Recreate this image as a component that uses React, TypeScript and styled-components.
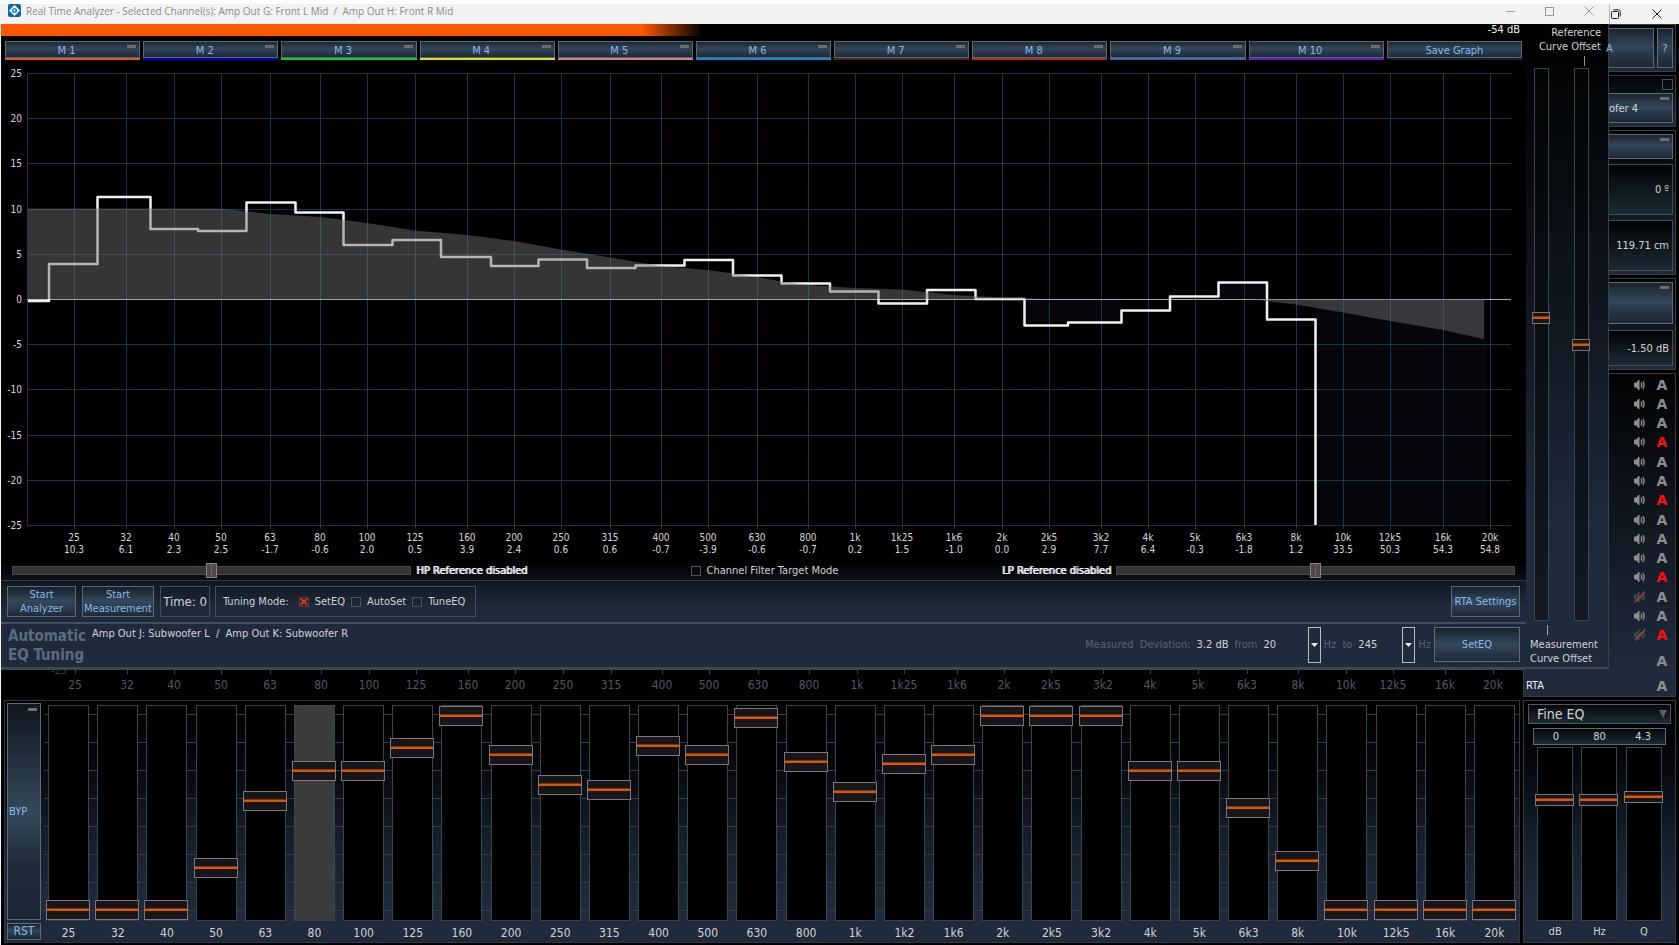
import React from 'react';
import styled, { createGlobalStyle } from 'styled-components';

const UI_FONT = '"DejaVu Sans Condensed", "Noto Sans", sans-serif';
const TITLE_FONT = '"Open Sans", "Noto Sans", sans-serif';

const LINE = '#3f5157';
const NAVY = '#1f2b3c';
const LINK = '#86b9ea';
const METAL = 'linear-gradient(to bottom, #1a242f 0%, #34485b 48%, #2b3c4e 60%, #1b2735 100%)';

const GlobalStyle = createGlobalStyle`
  * { box-sizing: border-box; }
  body { margin: 0; background: #000; }
  button, input, select { font: inherit; color: inherit; margin: 0; padding: 0; }
`;

/* ---------- data ---------- */

const MEMORIES = [
  { name: 'M 1', color: '#e2542a' },
  { name: 'M 2', color: '#0400c4' },
  { name: 'M 3', color: '#0ccf1c' },
  { name: 'M 4', color: '#e2e010' },
  { name: 'M 5', color: '#cf7d90' },
  { name: 'M 6', color: '#1189dd' },
  { name: 'M 7', color: '#4a2222' },
  { name: 'M 8', color: '#b92b2b' },
  { name: 'M 9', color: '#3b64b0' },
  { name: 'M 10', color: '#6517c8' },
];

const GRID: { x: number; hz: string; dev: string; lower: number }[] = [
  { x: 74, hz: '25', dev: '10.3', lower: 75 },
  { x: 126, hz: '32', dev: '6.1', lower: 127 },
  { x: 174, hz: '40', dev: '2.3', lower: 174 },
  { x: 221, hz: '50', dev: '2.5', lower: 221 },
  { x: 270, hz: '63', dev: '-1.7', lower: 270 },
  { x: 320, hz: '80', dev: '-0.6', lower: 321 },
  { x: 367, hz: '100', dev: '2.0', lower: 369 },
  { x: 415, hz: '125', dev: '0.5', lower: 416 },
  { x: 467, hz: '160', dev: '3.9', lower: 468 },
  { x: 514, hz: '200', dev: '2.4', lower: 515 },
  { x: 561, hz: '250', dev: '0.6', lower: 563 },
  { x: 610, hz: '315', dev: '0.6', lower: 611 },
  { x: 661, hz: '400', dev: '-0.7', lower: 662 },
  { x: 708, hz: '500', dev: '-3.9', lower: 709 },
  { x: 757, hz: '630', dev: '-0.6', lower: 758 },
  { x: 808, hz: '800', dev: '-0.7', lower: 809 },
  { x: 855, hz: '1k', dev: '0.2', lower: 857 },
  { x: 902, hz: '1k25', dev: '1.5', lower: 904 },
  { x: 954, hz: '1k6', dev: '-1.0', lower: 957 },
  { x: 1002, hz: '2k', dev: '0.0', lower: 1004 },
  { x: 1049, hz: '2k5', dev: '2.9', lower: 1051 },
  { x: 1101, hz: '3k2', dev: '7.7', lower: 1103 },
  { x: 1148, hz: '4k', dev: '6.4', lower: 1150 },
  { x: 1195, hz: '5k', dev: '-0.3', lower: 1198 },
  { x: 1244, hz: '6k3', dev: '-1.8', lower: 1247 },
  { x: 1296, hz: '8k', dev: '1.2', lower: 1298 },
  { x: 1343, hz: '10k', dev: '33.5', lower: 1346 },
  { x: 1390, hz: '12k5', dev: '50.3', lower: 1393 },
  { x: 1443, hz: '16k', dev: '54.3', lower: 1445 },
  { x: 1490, hz: '20k', dev: '54.8', lower: 1493 },
];

const DB_LEVELS = [25, 20, 15, 10, 5, 0, -5, -10, -15, -20, -25];
const dbY = (db: number) => Math.round(73 + (25 - db) * 9.04);

const STEP_LINE =
  'M28 301H49V264H97.5V197H150.5V229H198V231H246.5V202.5H295.5V212.5H343.5V245H392.5V240H441V257H491V266H538.5V259.5H587V268H635.5V265.5H684.5V260H733V275.5H781.5V283.5H830V291.5H878.5V303.5H927V290H975.5V299H1024.5V325.5H1068V322.5H1121.5V310.5H1170V296.5H1218.5V282.5H1267V319.5H1315.5V525';

const REF_LOW =
  'M28 299V208.5H221L270 214L321 217L367 223L415 230.5L467 235L514 241L561 249.5L610 257.5L661 266L708 270L757 277L782 281.5L808 285L855 288L902 289.5L954 295L1002 297.5L1049 299Z';
const REF_HIGH = 'M1250 299L1296 304.5L1343 312.5L1390 321L1443 330L1484 339V299Z';

const EQ_BANDS: { hz: string; value: number; active?: boolean }[] = [
  { hz: '25', value: 0 },
  { hz: '32', value: 0 },
  { hz: '40', value: 0 },
  { hz: '50', value: 42 },
  { hz: '63', value: 109 },
  { hz: '80', value: 139, active: true },
  { hz: '100', value: 139 },
  { hz: '125', value: 162 },
  { hz: '160', value: 194 },
  { hz: '200', value: 155 },
  { hz: '250', value: 125 },
  { hz: '315', value: 120 },
  { hz: '400', value: 164 },
  { hz: '500', value: 155 },
  { hz: '630', value: 192 },
  { hz: '800', value: 148 },
  { hz: '1k', value: 118 },
  { hz: '1k2', value: 146 },
  { hz: '1k6', value: 155 },
  { hz: '2k', value: 194 },
  { hz: '2k5', value: 194 },
  { hz: '3k2', value: 194 },
  { hz: '4k', value: 139 },
  { hz: '5k', value: 139 },
  { hz: '6k3', value: 102 },
  { hz: '8k', value: 49 },
  { hz: '10k', value: 0 },
  { hz: '12k5', value: 0 },
  { hz: '16k', value: 0 },
  { hz: '20k', value: 0 },
];

const FINE_SLIDERS = [
  { unit: 'dB', shown: '0', value: 114 },
  { unit: 'Hz', shown: '80', value: 114 },
  { unit: 'Q', shown: '4.3', value: 117 },
];

const CHANNELS = Array.from({ length: 14 }, (_, i) => ({
  muted: i === 11 || i === 13,
  alert: [3, 6, 10, 13].includes(i),
}));

/* ---------- page frame ---------- */

const Page = styled.div`
  display: flex;
  flex-direction: column;
  min-height: 100vh;
  border-top: 4px solid #fff;
  border-left: 1px solid #f4f4f4;
  background: #000;
  color: #d2d2d2;
  font: 11px/14px ${UI_FONT};
  cursor: default;
`;

const Row = styled.div`
  display: flex;
`;

const Window = styled.section`
  display: flex;
  flex: 1;
  flex-direction: column;
  min-width: 0;
  background: #000;
  border-bottom-right-radius: 6px;
`;

const TitleBar = styled.header<{ $outer?: boolean }>`
  display: flex;
  align-items: ${(p) => (p.$outer ? 'center' : 'flex-start')};
  height: 20px;
  padding-left: ${(p) => (p.$outer ? '0' : '7px')};
  background: #f2f2f2;
  border-left: ${(p) => (p.$outer ? '1px solid #b8b8b8' : '0')};
  color: #8c8c8c;
  font: 10px/14px ${TITLE_FONT};
`;

const TitleText = styled.h1`
  flex: 1;
  margin: 0 0 0 4px;
  font: inherit;
  white-space: pre;
`;

const CaptionButton = styled.button<{ $width: number; $dark?: boolean }>`
  display: flex;
  align-items: center;
  justify-content: center;
  width: ${(p) => p.$width}px;
  height: 14px;
  border: 0;
  background: none;
  color: ${(p) => (p.$dark ? '#1c1c1c' : '#9a9a9a')};
`;

const WindowBody = styled.div`
  display: flex;
  border-bottom: 2px solid #3a4a50;
`;

const MainColumn = styled.div`
  flex: 1;
  min-width: 0;
`;

/* ---------- level meter and memory buttons ---------- */

const LevelMeter = styled.div`
  display: flex;
  justify-content: flex-end;
  height: 12px;
  padding-right: 6px;
  background: linear-gradient(to right, #ff5800 42%, #000 46%);
  color: #f0f0f0;
  line-height: 12px;
`;

const MemoryBar = styled.div`
  display: grid;
  grid-template-columns: repeat(11, 1fr);
  gap: 3px;
  padding: 5px 4px 0 4px;
`;

const MemoryButton = styled.button<{ $color?: string }>`
  position: relative;
  height: 19px;
  padding: 2px ${(p) => (p.$color ? '12px' : '0')} 0 0;
  border: 0;
  border-bottom: 2px solid ${(p) => p.$color ?? '#16202c'};
  background: ${METAL};
  box-shadow: inset 0 0 0 1px #57696f;
  color: ${LINK};
  line-height: 15px;

  &::after {
    content: '';
    display: ${(p) => (p.$color ? 'block' : 'none')};
    position: absolute;
    top: 4px;
    right: 4px;
    width: 9px;
    height: 3px;
    background: #6c6c6b;
  }
`;

/* ---------- chart ---------- */

const ChartSvg = styled.svg`
  display: block;
  width: 100%;
  height: auto;
  font-family: ${UI_FONT};
  text-anchor: middle;
`;

const Chart = () => (
  <ChartSvg viewBox="1 60 1525 501" role="img" aria-label="Real time analyzer curve">
    <path d="M1218 299V283H1267V299ZM1024 299H1121V322H1024ZM1316 299H1487V525H1316Z" fill="#06060c" />
    <g stroke="#183846" strokeWidth="1" shapeRendering="crispEdges">
      {DB_LEVELS.map((db) => (
        <line key={db} x1="27" x2="1511" y1={dbY(db) + 0.5} y2={dbY(db) + 0.5} />
      ))}
      <line x1="27.5" x2="27.5" y1="73" y2="525" />
      {GRID.map((g) => (
        <line key={g.hz} x1={g.x + 0.5} x2={g.x + 0.5} y1="73" y2="529" />
      ))}
    </g>
    <line x1="27" x2="1511" y1="299.5" y2="299.5" stroke="#a4a8a8" />
    <path d={STEP_LINE} fill="none" stroke="#f2f2f2" strokeWidth="2.500" strokeLinejoin="round" />
    <path d={REF_LOW} fill="#707072" fillOpacity="0.47" />
    <path d={REF_HIGH} fill="#707072" fillOpacity="0.47" />
    <g fill="#d8d8d8" fontSize="10">
      {DB_LEVELS.map((db) => (
        <text key={db} x="22" y={dbY(db) + 4} textAnchor="end">
          {db}
        </text>
      ))}
      {GRID.map((g) => (
        <text key={g.hz} x={g.x} y="541">
          {g.hz}
        </text>
      ))}
      {GRID.map((g) => (
        <text key={g.hz} x={g.x} y="553">
          {g.dev}
        </text>
      ))}
    </g>
  </ChartSvg>
);

/* ---------- controls ---------- */

const FilterRow = styled.div`
  display: flex;
  align-items: center;
  justify-content: space-between;
  height: 19px;
  padding: 0 11px;
  background: linear-gradient(to bottom, #000, #0b0f15);
`;

const FilterLabel = styled.label`
  display: flex;
  align-items: center;
  gap: 5px;
  color: #f4f4f4;
  text-shadow: 1px 0 0 #f4f4f4;
`;

const HorizontalSlider = styled.input`
  appearance: none;
  width: 399px;
  height: 9px;
  border: 1px solid #474747;
  background: #343434;

  &::-webkit-slider-thumb {
    appearance: none;
    width: 11px;
    height: 15px;
    border: 1px solid #8b8085;
    background: linear-gradient(to right, #4c474b 4px, #85603f 4px, #85603f 5px, #4c474b 5px);
  }
`;

const Check = styled.input`
  appearance: none;
  display: flex;
  align-items: center;
  justify-content: center;
  width: 10px;
  height: 10px;
  border: 1px solid #43565b;
  background: transparent;

  &:checked {
    border-color: #5a3a36;
  }
  &:checked::before {
    content: '✕';
    color: #ff3410;
    font: bold 12px/10px "DejaVu Sans", sans-serif;
    text-shadow: 0 0 1px #ff3410;
  }
`;

const CheckLabel = styled.label`
  display: flex;
  align-items: center;
  gap: 6px;
  white-space: nowrap;
`;

const ControlRow = styled.div`
  display: flex;
  gap: 6px;
  padding: 5px 6px;
  border-top: 1px solid #2f3f47;
  border-bottom: 2px solid #3d505b;
  background: linear-gradient(to bottom, #10161e 0%, ${NAVY} 65%);
`;

const ActionButton = styled.button<{ $width: number }>`
  width: ${(p) => p.$width}px;
  min-height: 31px;
  padding-top: 1px;
  border: 1px solid #5b6d74;
  background: linear-gradient(to bottom, #16202b 0%, #34485b 50%, #1d2938 100%);
  color: ${LINK};
  line-height: 14px;
  white-space: nowrap;
`;

const TimeBox = styled.output`
  width: 50px;
  margin-right: -1px;
  padding-top: 1px;
  border: 1px solid ${LINE};
  font-size: 13px;
  line-height: 28px;
  text-align: center;
  white-space: nowrap;
`;

const TuningBox = styled.fieldset`
  display: flex;
  align-items: center;
  gap: 6px;
  width: 261px;
  margin: 0;
  padding: 1px 7px 0;
  border: 1px solid ${LINE};
`;

const TuningTitle = styled.span`
  margin-right: 4px;
  white-space: nowrap;
`;

const Spacer = styled.div`
  flex: 1;
`;

const TuneRow = styled.div`
  display: flex;
  height: 43px;
  padding: 3px 6px 5px 7px;
  background: ${NAVY};
`;

const TuneTitle = styled.h2`
  width: 84px;
  margin: 0;
  color: #5c6b80;
  font: bold 15px/19px ${UI_FONT};
`;

const TuneChannels = styled.span`
  white-space: pre;
`;

const DeviationForm = styled.div`
  display: flex;
  align-items: center;
  gap: 6px;
  padding: 1px 3px 0 0;
  color: #55647a;
  white-space: pre;
`;

const Value = styled.span`
  color: #d2d2d2;
`;

const Unit = styled.span`
  margin-left: -3px;
`;

const Combo = styled.span`
  display: grid;
  width: 57px;
  height: 36px;
`;

const ComboSelect = styled.select`
  grid-area: 1 / 1;
  appearance: none;
  border: 0;
  background: transparent;
  color: #d2d2d2;
`;

const ComboArrow = styled.span`
  grid-area: 1 / 1;
  display: flex;
  align-items: center;
  justify-content: center;
  justify-self: end;
  width: 13px;
  border: 1px solid #b9bcc0;
  pointer-events: none;
`;

/* ---------- vertical sliders ---------- */

const VerticalSlider = styled.input<{ $width: number; $height: number; $thumb: number; $fill?: string }>`
  appearance: none;
  writing-mode: vertical-lr;
  direction: rtl;
  width: ${(p) => p.$width}px;
  height: ${(p) => p.$height}px;
  border: 1px solid #37484b;
  background: ${(p) => p.$fill ?? '#000'};

  &::-webkit-slider-thumb {
    appearance: none;
    width: ${(p) => p.$width + 3}px;
    height: ${(p) => p.$thumb}px;
    margin-left: -1px;
    border: 1px solid #7d757b;
    background: linear-gradient(
      to bottom,
      #17161b calc(50% - 2px),
      #7a3708 calc(50% - 2px),
      #7a3708 calc(50% - 1px),
      #dc5604 calc(50% - 1px),
      #dc5604 calc(50% + 1px),
      #17161b calc(50% + 1px)
    );
  }
`;

const OffsetColumn = styled.div`
  display: flex;
  flex-direction: column;
  width: 83px;
  padding: 2px 6px 1px 4px;
  background: linear-gradient(to bottom, #000 0%, #05080b 15%, #141c27 55%, ${NAVY} 78%);
  border-right: 1px solid #3a4145;
`;

const OffsetLabel = styled.div<{ $end?: boolean }>`
  padding-right: 1px;
  text-align: ${(p) => (p.$end ? 'right' : 'left')};
`;

const OffsetTick = styled.div<{ $end?: boolean }>`
  width: 1px;
  height: 10px;
  margin: ${(p) => (p.$end ? '2px 17px 2px auto' : '4px 0 3px 17px')};
  background: ${(p) => (p.$end ? '#a08c78' : '#a0a4a8')};
`;

const OffsetSliders = styled.div`
  display: flex;
  flex: 1;
  gap: 25px;
  padding-left: 4px;
`;

/* ---------- side strip ---------- */

const Side = styled.aside`
  display: flex;
  flex-direction: column;
  gap: 3px;
  width: 70px;
`;

const SidePanel = styled.div<{ $gap?: number; $grow?: boolean; $first?: boolean }>`
  display: flex;
  flex: ${(p) => (p.$grow ? '1' : 'none')};
  flex-direction: column;
  gap: ${(p) => p.$gap ?? 4}px;
  width: 67px;
  margin-top: ${(p) => (p.$first ? '-3px' : '0')};
  padding: 3px 2px ${(p) => (p.$grow ? '0' : '3px')} 0;
  border: 1px solid #3c3c3e;
  border-left: 0;
  border-bottom-width: ${(p) => (p.$grow ? '0' : '1px')};
  background: linear-gradient(to bottom, #020304, ${NAVY});
`;

const SideRow = styled.div`
  display: flex;
  justify-content: flex-end;
  gap: 3px;
`;

const SideButton = styled.button<{ $height: number; $width?: number; $flag?: boolean; $tucked?: boolean }>`
  position: relative;
  width: ${(p) => (p.$width ? `${p.$width}px` : '100%')};
  height: ${(p) => p.$height}px;
  padding-top: 2px;
  border: 1px solid #5b6d74;
  border-left-width: ${(p) => (p.$width === 16 ? '1px' : '0')};
  background: ${METAL};
  color: ${(p) => (p.$flag ? '#d2d2d2' : LINK)};
  text-align: ${(p) => (p.$width === 16 ? 'center' : 'left')};
  text-indent: ${(p) => (p.$tucked ? '-3px' : '0')};

  &::after {
    content: '';
    display: ${(p) => (p.$flag ? 'block' : 'none')};
    position: absolute;
    top: 3px;
    right: 3px;
    width: 9px;
    height: 3px;
    background: #6c6c6b;
  }
`;

const SideCheck = styled(Check)`
  width: 11px;
  height: 11px;
`;

const Readout = styled.output<{ $height: number }>`
  display: flex;
  align-items: center;
  justify-content: flex-end;
  height: ${(p) => p.$height}px;
  padding: 1px 3px 0 0;
  border: 1px solid ${LINE};
  border-left: 0;
  background: linear-gradient(to bottom, #020304, #1d2a33);
  white-space: nowrap;
`;

const ChannelList = styled.ul`
  display: grid;
  grid-auto-rows: 1fr;
  height: 270px;
  margin: -2px 0 0;
  padding: 0;
  list-style: none;
`;

const ChannelItem = styled.li`
  display: flex;
  align-items: center;
  justify-content: flex-end;
  gap: 10px;
  padding-right: 5px;
  list-style: none;
`;

const MasterItem = styled(ChannelItem).attrs({ as: 'div' })`
  padding-top: 4px;
`;

const IconButton = styled.button`
  display: flex;
  border: 0;
  background: none;
`;

const AutoMark = styled.button<{ $alert?: boolean }>`
  width: 12px;
  border: 0;
  background: none;
  color: ${(p) => (p.$alert ? '#ff0d0d' : '#8b8d8f')};
  font: bold 14px/16px "DejaVu Sans", sans-serif;
  text-align: center;
`;

const Speaker = ({ muted }: { muted: boolean }) => (
  <svg width="12" height="12" viewBox="0 0 12 12" fill="none" stroke={muted ? '#4c4a4c' : '#8e8e8e'}>
    <path d="M0.500 4H2.500L5 1V11L2.500 8H0.500Z" fill={muted ? '#3b3f45' : '#8e8e8e'} />
    <path d="M7 3.500Q8.400 6 7 8.500M8.800 2.200Q11.400 6 8.800 9.800" strokeWidth="1.400" />
    {muted && <path d="M1 11.500L11 0.500" stroke="#a8482c" strokeWidth="1.400" />}
  </svg>
);

/* ---------- lower part ---------- */

const AxisSvg = styled.svg`
  display: block;
  flex: 1;
  min-width: 0;
  font-family: ${UI_FONT};
  font-size: 12px;
  text-anchor: middle;
`;

const RtaChannel = styled.div`
  display: flex;
  align-items: center;
  justify-content: space-between;
  width: 153px;
  height: 28px;
  margin-right: 3px;
  padding: 7px 7px 0 2px;
  border: 1px solid #3c3c3e;
  border-top: 0;
  background: ${NAVY};
  color: #f0f0f0;
`;

const Lower = styled.div`
  display: flex;
  gap: 3px;
  padding: 3px 3px 0 3px;
`;

const EqPanel = styled.section`
  display: flex;
  flex: 1;
  gap: 3px;
  min-width: 0;
  padding: 2px 0 2px 2px;
  border: 1px solid #34373a;
  background: linear-gradient(to bottom, #000 0%, #05080c 25%, #141d29 55%, ${NAVY} 85%);
`;

const BypassColumn = styled.div`
  display: flex;
  flex-direction: column;
  gap: 3px;
  width: 34px;
`;

const BypassButton = styled.button`
  position: relative;
  flex: 1;
  padding-left: 1px;
  border: 1px solid #5b6d74;
  background: linear-gradient(to bottom, #10161d 0%, #34485b 50%, #1f2b3a 75%, #1b2636 100%);
  color: ${LINK};
  text-align: left;

  &::after {
    content: '';
    position: absolute;
    top: 4px;
    right: 3px;
    width: 9px;
    height: 3px;
    background: #6f7173;
  }
`;

const ResetButton = styled.button`
  height: 17px;
  border: 1px solid #5b6d74;
  background: ${METAL};
  color: ${LINK};
  font-size: 12px;
  line-height: 15px;
`;

const Bands = styled.div`
  display: grid;
  flex: 1;
  grid-template-columns: repeat(30, 1fr);
  min-width: 0;
  font-size: 12px;
`;

const Band = styled.label`
  display: flex;
  flex-direction: column;
  align-items: center;
  gap: 5px;
`;

const BandTrack = styled.span`
  display: flex;
  justify-content: center;
  width: 100%;
  padding-top: 2px;
  background: linear-gradient(to bottom, transparent 27px, #363c40 27px) 0 -16px / 100% 28px;
`;

const FinePanel = styled.section`
  display: flex;
  flex-direction: column;
  width: 153px;
  padding: 3px 4px 0;
  border: 1px solid #3c3c3e;
  background: linear-gradient(to bottom, #000 0%, #05080c 25%, #141d29 55%, ${NAVY} 85%);
`;

const FineSelectBox = styled.span`
  display: grid;
  height: 20px;
  border: 1px solid #4a5c62;
  background: linear-gradient(to bottom, #05080b, #1d2a33);
`;

const FineSelect = styled.select`
  grid-area: 1 / 1;
  appearance: none;
  padding-left: 8px;
  border: 0;
  background: transparent;
  font-size: 14px;
`;

const FineArrow = styled.svg`
  grid-area: 1 / 1;
  justify-self: end;
  margin: 5px 3px 0 0;
  pointer-events: none;
`;

const FineGrid = styled.div<{ $boxed?: boolean }>`
  display: grid;
  grid-template-columns: repeat(3, 1fr);
  justify-items: center;
  margin: ${(p) => (p.$boxed ? '4px 5px 2px' : '0 5px')};
  border: ${(p) => (p.$boxed ? '1px solid #5b6d74' : '0')};
  background: ${(p) => (p.$boxed ? 'linear-gradient(to bottom, #05080b, #1d2a38)' : 'none')};
  line-height: 15px;
`;

const FineBand = styled.label`
  display: flex;
  flex-direction: column;
  align-items: center;
  gap: 3px;
`;

const Frequency = ({ label, value }: { label: string; value: string }) => (
  <Combo>
    <ComboSelect aria-label={label} defaultValue={value}>
      <option>{value}</option>
    </ComboSelect>
    <ComboArrow>
      <svg width="7" height="5" viewBox="0 0 7 5">
        <path d="M0 0H7L3.500 4Z" fill="#e8e8e8" />
      </svg>
    </ComboArrow>
  </Combo>
);

const App = () => (
  <>
    <GlobalStyle />
    <Page>
      <Row>
        <Window>
          <TitleBar>
            <svg width="14" height="14" viewBox="0 0 14 14">
              <rect width="13" height="13" rx="2" fill="#0b66b0" />
              <path d="M6.500 1L12 6.500L6.500 12L1 6.500Z" fill="#fff" />
              <circle cx="6.500" cy="6.500" r="2.600" fill="#1c87cf" />
              <circle cx="6.500" cy="6.500" r="1" fill="#fff" />
            </svg>
            <TitleText>
              {'Real Time Analyzer - Selected Channel(s): Amp Out G: Front L Mid  /  Amp Out H: Front R Mid'}
            </TitleText>
            <CaptionButton $width={39} aria-label="Minimize">
              <svg width="9" height="9" viewBox="0 0 9 9" stroke="currentColor">
                <path d="M0 4.500H9" />
              </svg>
            </CaptionButton>
            <CaptionButton $width={39} aria-label="Maximize">
              <svg width="9" height="9" viewBox="0 0 9 9" stroke="currentColor" fill="none">
                <rect x="0.500" y="0.500" width="8" height="8" />
              </svg>
            </CaptionButton>
            <CaptionButton $width={40} aria-label="Close">
              <svg width="10" height="10" viewBox="0 0 10 10" stroke="currentColor">
                <path d="M0.500 0.500L9.500 9.500M9.500 0.500L0.500 9.500" />
              </svg>
            </CaptionButton>
          </TitleBar>
          <WindowBody>
            <MainColumn>
              <LevelMeter>-54 dB</LevelMeter>
              <MemoryBar>
                {MEMORIES.map((m) => (
                  <MemoryButton key={m.name} $color={m.color}>
                    {m.name}
                  </MemoryButton>
                ))}
                <MemoryButton>Save Graph</MemoryButton>
              </MemoryBar>
              <Chart />
              <FilterRow>
                <FilterLabel>
                  <HorizontalSlider type="range" defaultValue={50} />
                  HP Reference disabled
                </FilterLabel>
                <CheckLabel>
                  <Check type="checkbox" />
                  Channel Filter Target Mode
                </CheckLabel>
                <FilterLabel>
                  LP Reference disabled
                  <HorizontalSlider type="range" defaultValue={50} />
                </FilterLabel>
              </FilterRow>
              <ControlRow>
                <ActionButton $width={69}>
                  Start
                  <br />
                  Analyzer
                </ActionButton>
                <ActionButton $width={72}>
                  Start
                  <br />
                  Measurement
                </ActionButton>
                <TimeBox>Time: 0</TimeBox>
                <TuningBox>
                  <TuningTitle>Tuning Mode:</TuningTitle>
                  <CheckLabel>
                    <Check type="checkbox" defaultChecked />
                    SetEQ
                  </CheckLabel>
                  <CheckLabel>
                    <Check type="checkbox" />
                    AutoSet
                  </CheckLabel>
                  <CheckLabel>
                    <Check type="checkbox" />
                    TuneEQ
                  </CheckLabel>
                </TuningBox>
                <Spacer />
                <ActionButton $width={69}>RTA Settings</ActionButton>
              </ControlRow>
              <TuneRow>
                <TuneTitle>
                  Automatic
                  <br />
                  EQ Tuning
                </TuneTitle>
                <TuneChannels>{'Amp Out J: Subwoofer L  /  Amp Out K: Subwoofer R'}</TuneChannels>
                <Spacer />
                <DeviationForm>
                  <span>{'Measured  Deviation:'}</span>
                  <Value>3.2 dB</Value>
                  <span>from</span>
                  <Frequency label="From frequency" value="20" />
                  <Unit>{'Hz  to'}</Unit>
                  <Frequency label="To frequency" value="245" />
                  <Unit>Hz</Unit>
                </DeviationForm>
                <ActionButton $width={86}>SetEQ</ActionButton>
              </TuneRow>
            </MainColumn>
            <OffsetColumn>
              <OffsetLabel $end>Reference</OffsetLabel>
              <OffsetLabel $end>Curve Offset</OffsetLabel>
              <OffsetTick $end />
              <OffsetSliders>
                <VerticalSlider
                  type="range"
                  aria-label="Measurement curve offset"
                  max={539}
                  defaultValue={296}
                  $width={15}
                  $height={553}
                  $thumb={12}
                  $fill="linear-gradient(to bottom, #030506, #121923)"
                />
                <VerticalSlider
                  type="range"
                  aria-label="Reference curve offset"
                  max={539}
                  defaultValue={269}
                  $width={15}
                  $height={553}
                  $thumb={12}
                  $fill="linear-gradient(to bottom, #030506, #121923)"
                />
              </OffsetSliders>
              <OffsetTick />
              <OffsetLabel>Measurement</OffsetLabel>
              <OffsetLabel>Curve Offset</OffsetLabel>
            </OffsetColumn>
          </WindowBody>
        </Window>
        <Side>
          <TitleBar $outer>
            <CaptionButton $width={12} $dark aria-label="Restore">
              <svg width="10" height="10" viewBox="0 0 10 10" stroke="currentColor" fill="none">
                <rect x="0.500" y="2.500" width="7" height="7" rx="1" />
                <path d="M2.500 0.800H7.500Q9.200 0.800 9.200 2.500V7.500" />
              </svg>
            </CaptionButton>
            <Spacer />
            <CaptionButton $width={44} $dark aria-label="Close application">
              <svg width="10" height="10" viewBox="0 0 10 10" stroke="currentColor">
                <path d="M0.500 0.500L9.500 9.500M9.500 0.500L0.500 9.500" />
              </svg>
            </CaptionButton>
          </TitleBar>
          <SidePanel $first>
            <SideRow>
              <SideButton $height={40} $width={45} $tucked>
                A
              </SideButton>
              <SideButton $height={40} $width={16}>
                ?
              </SideButton>
            </SideRow>
          </SidePanel>
          <SidePanel $gap={3}>
            <SideRow>
              <SideCheck type="checkbox" aria-label="Select output" />
            </SideRow>
            <SideButton $height={30} $flag>
              ofer 4
            </SideButton>
          </SidePanel>
          <SidePanel $gap={5}>
            <SideButton $height={25} $flag aria-label="Phase" />
            <Readout $height={51}>0 º</Readout>
            <Readout $height={51}>119.71 cm</Readout>
          </SidePanel>
          <SidePanel $gap={6}>
            <SideButton $height={42} $flag aria-label="Gain" />
            <Readout $height={36}>-1.50 dB</Readout>
          </SidePanel>
          <SidePanel $grow>
            <ChannelList>
              {CHANNELS.map((c, i) => (
                <ChannelItem key={i}>
                  <IconButton aria-label={c.muted ? 'Unmute' : 'Mute'}>
                    <Speaker muted={c.muted} />
                  </IconButton>
                  <AutoMark $alert={c.alert}>A</AutoMark>
                </ChannelItem>
              ))}
            </ChannelList>
            <MasterItem>
              <AutoMark>A</AutoMark>
            </MasterItem>
          </SidePanel>
        </Side>
      </Row>
      <Row>
        <AxisSvg viewBox="1 671 1522 28">
          <path d="M1 671.500H1523" stroke="#3a4a4e" />
          <text x="59" y="676" fontSize="11" fill="#3c444e">
            -25
          </text>
          {GRID.map((g) => (
            <g key={g.hz}>
              <path d={`M${g.lower + 0.5} 672V676`} stroke="#2c4650" />
              <text x={g.lower} y="691" fill="#4e5a69">
                {g.hz}
              </text>
            </g>
          ))}
        </AxisSvg>
        <RtaChannel>
          RTA
          <AutoMark>A</AutoMark>
        </RtaChannel>
      </Row>
      <Lower>
        <EqPanel>
          <BypassColumn>
            <BypassButton>BYP</BypassButton>
            <ResetButton>RST</ResetButton>
          </BypassColumn>
          <Bands>
            {EQ_BANDS.map((b) => (
              <Band key={b.hz}>
                <BandTrack>
                  <VerticalSlider
                    type="range"
                    max={194}
                    defaultValue={b.value}
                    $width={41}
                    $height={216}
                    $thumb={20}
                    $fill={b.active ? '#3c3c3c' : '#000'}
                  />
                </BandTrack>
                {b.hz}
              </Band>
            ))}
          </Bands>
        </EqPanel>
        <FinePanel>
          <FineSelectBox>
            <FineSelect aria-label="Equalizer type" defaultValue="Fine EQ">
              <option>Fine EQ</option>
            </FineSelect>
            <FineArrow width="8" height="8" viewBox="0 0 8 8">
              <path d="M0 0H8L4 8Z" fill="#4d6468" />
            </FineArrow>
          </FineSelectBox>
          <FineGrid $boxed>
            {FINE_SLIDERS.map((s) => (
              <span key={s.unit}>{s.shown}</span>
            ))}
          </FineGrid>
          <FineGrid>
            {FINE_SLIDERS.map((s) => (
              <FineBand key={s.unit}>
                <VerticalSlider
                  type="range"
                  max={160}
                  defaultValue={s.value}
                  $width={36}
                  $height={174}
                  $thumb={12}
                />
                {s.unit}
              </FineBand>
            ))}
          </FineGrid>
        </FinePanel>
      </Lower>
    </Page>
  </>
);

export default App;
